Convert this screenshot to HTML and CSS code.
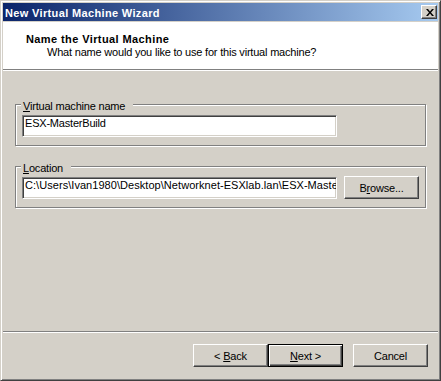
FILE: index.html
```html
<!DOCTYPE html>
<html>
<head>
  <meta charset="utf-8">
  <link rel="stylesheet" href="styles.css">
</head>
<body>
  <div class="window">
    <!-- Title bar -->
    <div class="titlebar">
      <span class="title">New Virtual Machine Wizard</span>
      <button class="close-btn">
        <svg width="8" height="7" viewBox="0 0 8 7">
          <path d="M0 0h2l2 2.4 2-2.4h2l-3 3.5 3 3.5h-2l-2-2.4-2 2.4h-2l3-3.5z" fill="#000"/>
        </svg>
      </button>
    </div>

    <div class="header">
      <div class="header-title">Name the Virtual Machine</div>
      <div class="header-sub">What name would you like to use for this virtual machine?</div>
    </div>
    <div class="separator"></div>

    <div class="content">
      <div class="group">
        <div class="group-label"><u>V</u>irtual machine name</div>
        <div class="group-row">
          <div class="textbox">ESX-MasterBuild</div>
        </div>
      </div>

      <div class="group">
        <div class="group-label"><u>L</u>ocation</div>
        <div class="group-row">
          <div class="textbox path">C:\Users\Ivan1980\Desktop\Networknet-ESXlab.lan\ESX-MasterBuild</div>
          <button class="btn browse-btn">B<u>r</u>owse...</button>
        </div>
      </div>
    </div>

    <div class="separator"></div>
    <div class="footer">
      <button class="btn">&lt; <u>B</u>ack</button>
      <button class="btn default"><u>N</u>ext &gt;</button>
      <button class="btn cancel-btn">Cancel</button>
    </div>
  </div>
</body>
</html>
```

FILE: styles.css
```css
body {
  margin: 0;
  background: #d4d0c8;
}

.window {
  width: 441px;
  height: 381px;
  box-sizing: border-box;
  border: 1px solid;
  border-color: #d4d0c8 #404040 #404040 #d4d0c8;
  box-shadow: inset 1px 1px #fff, inset -1px -1px #808080;
  padding: 2px;
  background: #d4d0c8;
  display: flex;
  flex-direction: column;
  font-family: "Liberation Sans", Arial, sans-serif;
  font-size: 11px;
  letter-spacing: -0.2px;
  color: #000;
}

/* Title bar */
.titlebar {
  flex: none;
  height: 18px;
  margin-bottom: 1px;
  padding: 0 1px 0 2px;
  display: flex;
  align-items: flex-start;
  background: linear-gradient(to right, #0a246a, #a6caf0);
}

.title {
  flex: 1;
  padding-top: 2px;
  line-height: 16px;
  font-weight: bold;
  letter-spacing: 0.35px;
  color: #fff;
}

.close-btn {
  width: 16px;
  height: 14px;
  margin-top: 2px;
  padding: 0;
  box-sizing: border-box;
  border: 1px solid;
  border-color: #fff #404040 #404040 #fff;
  box-shadow: inset -1px -1px #808080;
  background: #d4d0c8;
  display: flex;
  align-items: center;
  justify-content: center;
}

.close-btn svg {
  display: block;
  margin: 0 0 0 1px;
}

/* Header */
.header {
  flex: none;
  height: 47px;
  box-sizing: border-box;
  padding: 10px 0 0 23px;
  background: #fff;
}

.header-title {
  font-weight: bold;
  letter-spacing: 0.4px;
  line-height: 14px;
}

.header-sub {
  padding-left: 21px;
  line-height: 13px;
}

.separator {
  flex: none;
  height: 2px;
  box-sizing: border-box;
  border-top: 1px solid #808080;
  background: #fff;
}

/* Body */
.content {
  flex: 1;
  padding: 33px 0 0 12px;
}

.group {
  width: 411px;
  box-sizing: border-box;
  border: 1px solid #808080;
  box-shadow: inset 1px 1px #fff, 1px 1px #fff;
  padding: 0 6px 8px 6px;
}

.group + .group {
  margin-top: 20px;
}

.group-label {
  width: fit-content;
  margin: -5px 0 0 -1px;
  padding: 0 8px 0 2px;
  line-height: 13px;
  background: #d4d0c8;
}

.group-row {
  display: flex;
  align-items: flex-start;
  margin-top: 2px;
}

.textbox {
  flex: none;
  width: 315px;
  height: 22px;
  box-sizing: border-box;
  border: 1px solid;
  border-color: #808080 #fff #fff #808080;
  box-shadow: inset 1px 1px #404040, inset -1px -1px #d4d0c8;
  padding: 0 2px;
  line-height: 15px;
  background: #fff;
  white-space: nowrap;
  overflow: hidden;
}

.textbox.path {
  letter-spacing: 0.05px;
}

/* Buttons */
.btn {
  flex: none;
  width: 75px;
  height: 23px;
  box-sizing: border-box;
  padding: 0;
  border: 1px solid;
  border-color: #fff #404040 #404040 #fff;
  box-shadow: inset -1px -1px #808080;
  background: #d4d0c8;
  font-family: "Liberation Sans", Arial, sans-serif;
  font-size: 11px;
  letter-spacing: -0.2px;
  color: #000;
}

.btn.default {
  border-color: #000;
  box-shadow: inset 1px 1px #fff, inset -1px -1px #404040, inset -2px -2px #808080;
}

.browse-btn {
  margin: -1px 0 0 7px;
}

.footer {
  flex: none;
  height: 45px;
  box-sizing: border-box;
  padding: 11px 10px 0 0;
  display: flex;
  justify-content: flex-end;
  align-items: flex-start;
}

.cancel-btn {
  margin-left: 10px;
}
```
